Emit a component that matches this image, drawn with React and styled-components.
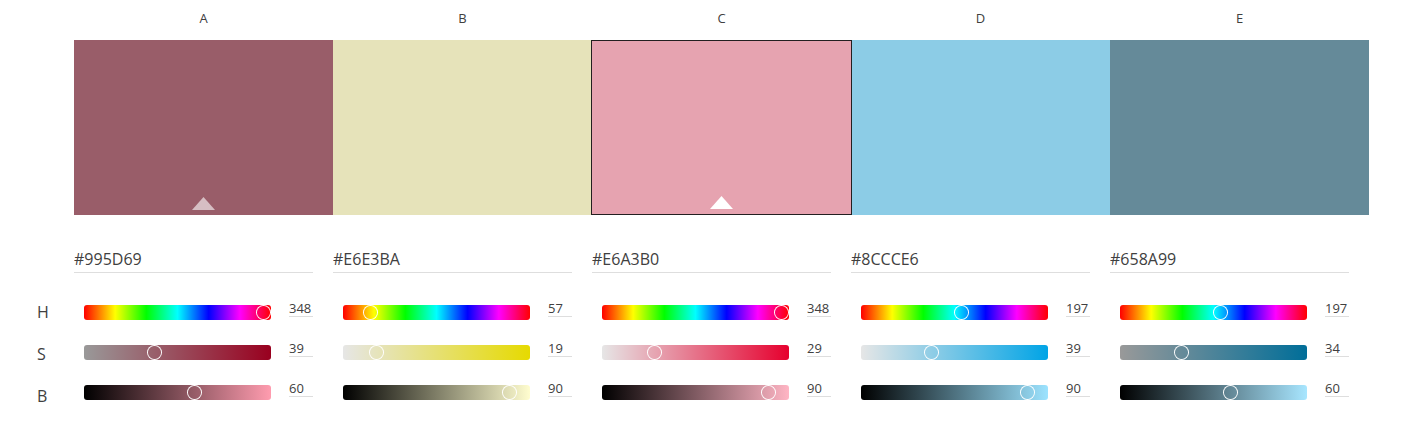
import React from "react";
import styled, { createGlobalStyle } from "styled-components";

const GlobalStyle = createGlobalStyle`
  *, *::before, *::after { box-sizing: border-box; }
  body {
    margin: 0;
    background: #ffffff;
    color: #404040;
    font-family: "Open Sans", "Noto Sans", sans-serif;
  }
  button, input { font: inherit; color: inherit; }
`;

const Page = styled.main`
  display: grid;
  grid-template-columns: 37px repeat(5, minmax(0, 1fr));
  padding: 0 35px 16px 37px;
`;

const ChannelNames = styled.div`
  display: flex;
  flex-direction: column;
  padding-top: 291px;
`;

const ChannelName = styled.span`
  font-size: 16px;
  line-height: 42px;
`;

const Column = styled.section`
  display: flex;
  flex-direction: column;
  min-width: 0;
`;

const Letter = styled.h2`
  margin: 0 0 4px;
  font-size: 13px;
  font-weight: 400;
  line-height: 36px;
  text-align: center;
`;

const Swatch = styled.button`
  position: relative;
  z-index: ${(p) => (p.$active ? 1 : 0)};
  display: flex;
  align-items: flex-end;
  justify-content: center;
  height: 175px;
  margin: ${(p) => (p.$active ? "0 -1px" : "0")};
  padding: 0 0 5px;
  border: ${(p) => (p.$active ? "1px solid #231f20" : "0")};
  background: ${(p) => p.$color};
  cursor: pointer;
`;

const Marker = styled.svg`
  display: block;
  width: 23px;
  height: 13px;
  fill: #ffffff;
  opacity: ${(p) => (p.$active ? 1 : 0.6)};
`;

const Controls = styled.div`
  display: flex;
  flex-direction: column;
  padding: 31px 20px 0 0;
`;

const Field = styled.input`
  display: block;
  min-width: 0;
  padding: 0;
  border: 0;
  border-bottom: 1px solid #dedede;
  border-radius: 0;
  background: transparent;
  outline: none;
`;

const HexField = styled(Field)`
  width: 100%;
  height: 27px;
  margin-bottom: 27px;
  font-size: 16px;
`;

const ValueField = styled(Field)`
  width: 24px;
  height: 17px;
  font-size: 13px;
  line-height: 16px;
`;

const ChannelRow = styled.div`
  display: flex;
  align-items: flex-start;
  justify-content: space-between;
  gap: 18px;
  height: 40px;
  padding-left: 10px;
`;

const Track = styled.div`
  flex: 1;
  display: flex;
  height: 15px;
  margin-top: 5px;
  border-radius: 3px;
  background: linear-gradient(to right, ${(p) => p.$stops});
`;

const Slider = styled.input`
  appearance: none;
  flex: 1;
  min-width: 0;
  height: 15px;
  margin: 0 -6px 0 -10px;
  background: transparent;
  outline: none;
  cursor: pointer;

  &::-webkit-slider-thumb {
    appearance: none;
    width: 15px;
    height: 15px;
    border-radius: 50%;
    background: radial-gradient(circle, transparent 6px, #ffffff 7px);
  }

  &::-moz-range-thumb {
    width: 15px;
    height: 15px;
    border: 0;
    border-radius: 50%;
    background: radial-gradient(circle, transparent 6px, #ffffff 7px);
  }
`;

const HUES = "#f00, #ff0, #0f0, #0ff, #00f, #f0f, #f00";

const palette = [
  { letter: "A", hex: "#995D69", h: 348, s: 39, b: 60, marker: true },
  { letter: "B", hex: "#E6E3BA", h: 57, s: 19, b: 90 },
  { letter: "C", hex: "#E6A3B0", h: 348, s: 29, b: 90, marker: true, active: true },
  { letter: "D", hex: "#8CCCE6", h: 197, s: 39, b: 90 },
  { letter: "E", hex: "#658A99", h: 197, s: 34, b: 60 },
];

function hsb(h, s, b) {
  const channel = (n) => {
    const k = (n + h / 60) % 6;
    const v = (b / 100) * (1 - (s / 100) * Math.max(0, Math.min(k, 4 - k, 1)));
    return Math.round(v * 255);
  };
  return `rgb(${channel(5)}, ${channel(3)}, ${channel(1)})`;
}

function Channel({ name, max, value, stops }) {
  return (
    <ChannelRow>
      <Track $stops={stops}>
        <Slider type="range" min={0} max={max} defaultValue={value} aria-label={`${name} slider`} />
      </Track>
      <ValueField type="text" inputMode="numeric" defaultValue={value} aria-label={name} />
    </ChannelRow>
  );
}

function ColorColumn({ color }) {
  const { letter, hex, h, s, b, marker, active } = color;
  return (
    <Column>
      <Letter>{letter}</Letter>
      <Swatch type="button" $color={hex} $active={active} aria-label={`Color ${letter}`} aria-pressed={!!active}>
        {marker && (
          <Marker $active={active} viewBox="0 0 23 13" aria-hidden="true">
            <path d="M11.5 0 23 13H0Z" />
          </Marker>
        )}
      </Swatch>
      <Controls>
        <HexField type="text" defaultValue={hex} spellCheck={false} aria-label={`Hex value ${letter}`} />
        <Channel name={`Hue ${letter}`} max={360} value={h} stops={HUES} />
        <Channel name={`Saturation ${letter}`} max={100} value={s} stops={`${hsb(h, 0, b)}, ${hsb(h, 100, b)}`} />
        <Channel name={`Brightness ${letter}`} max={100} value={b} stops={`#000, ${hsb(h, s, 100)}`} />
      </Controls>
    </Column>
  );
}

export default function App() {
  return (
    <>
      <GlobalStyle />
      <Page>
        <ChannelNames>
          <ChannelName>H</ChannelName>
          <ChannelName>S</ChannelName>
          <ChannelName>B</ChannelName>
        </ChannelNames>
        {palette.map((color) => (
          <ColorColumn key={color.letter} color={color} />
        ))}
      </Page>
    </>
  );
}
